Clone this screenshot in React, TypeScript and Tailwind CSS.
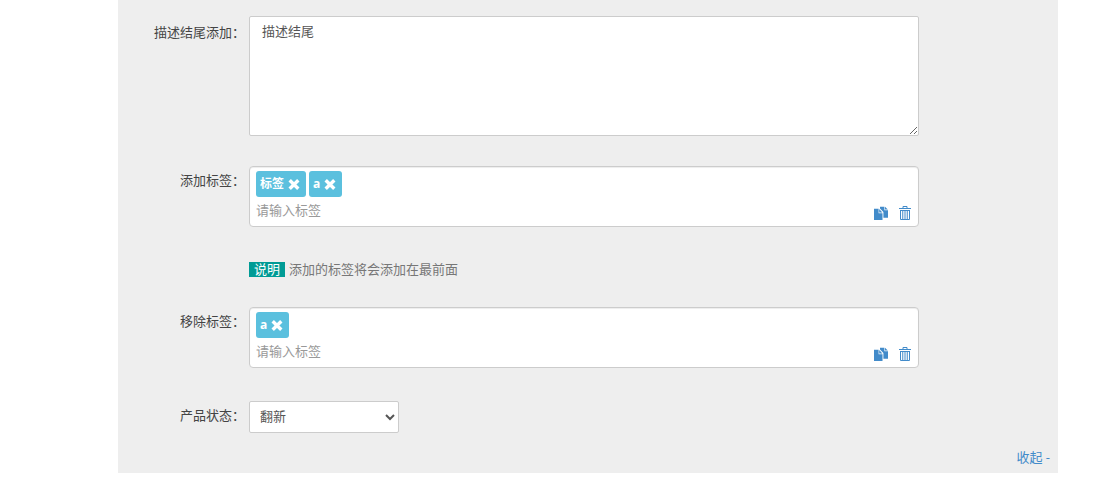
import { useState } from 'react';
import type { ReactNode } from 'react';

function RemoveIcon() {
  return (
    <svg viewBox="0 0 12 12" className="w-3 h-3" fill="none" stroke="currentColor" strokeWidth="3.4" aria-hidden="true">
      <path d="M1.7 2.2 10.3 10.8M10.3 2.2 1.7 10.8" />
    </svg>
  );
}

function CopyIcon() {
  return (
    <svg viewBox="0 0 14 14" className="w-3.5 h-3.5" fill="currentColor" aria-hidden="true">
      <path d="M6 .8h4.4v3.4H14v7.6H9.4V6L6 2.4z" />
      <path d="M11 .8 13.8 3.6H11z" />
      <path d="M0 2.8h4.6v4.4h3.9V14H0z" />
      <path d="M5.2 3 8.4 6.6H5.2z" />
    </svg>
  );
}

function TrashIcon() {
  return (
    <svg viewBox="0 0 14 14" className="w-3.5 h-3.5" fill="none" stroke="currentColor" aria-hidden="true">
      <path d="M5 2V.5h4V2M1 2.5h12" />
      <path d="M2.5 4v9.5h9V4M2 4.5h10" />
      <path d="M4.75 5v8M7 5v8M9.25 5v8" />
    </svg>
  );
}

function Row({ label, id, multiline, children }: { label: string; id: string; multiline?: boolean; children: ReactNode }) {
  return (
    <div className="flex gap-1">
      <label
        htmlFor={id}
        className={`w-[127px] shrink-0 text-right leading-5 text-[#444] ${multiline ? 'pt-1.5' : 'pt-1'}`}
      >
        {label}
      </label>
      <div className="flex-1">{children}</div>
    </div>
  );
}

function TagBox({ id, initial }: { id: string; initial: string[] }) {
  const [tags, setTags] = useState(initial);
  const [text, setText] = useState('');

  const addTag = () => {
    const value = text.trim();
    if (value && !tags.includes(value)) setTags([...tags, value]);
    setText('');
  };

  return (
    <div className="rounded border border-[#ccc] bg-white px-1.5 pt-1 pb-1.5 shadow-[inset_0_1px_1px_rgba(0,0,0,0.075)]">
      <div className="flex min-h-[26px] flex-wrap gap-[3px]">
        {tags.map((tag) => (
          <span
            key={tag}
            className="flex h-[26px] items-center gap-1 rounded-[3px] bg-[#5bc0de] pr-1.5 pl-1 text-[12px] font-bold text-white"
          >
            {tag}
            <button type="button" aria-label={`移除 ${tag}`} onClick={() => setTags(tags.filter((t) => t !== tag))}>
              <RemoveIcon />
            </button>
          </span>
        ))}
      </div>
      <div className="flex items-end gap-[10px] pt-0.5">
        <input
          id={id}
          value={text}
          placeholder="请输入标签"
          onChange={(e) => setText(e.target.value)}
          onKeyDown={(e) => e.key === 'Enter' && addTag()}
          className="h-[21px] min-w-0 flex-1 text-[#555] outline-none placeholder:text-[#999]"
        />
        <button
          type="button"
          aria-label="复制"
          className="text-[#428bca]"
          onClick={() => navigator.clipboard?.writeText(tags.join(','))}
        >
          <CopyIcon />
        </button>
        <button type="button" aria-label="清空" className="text-[#428bca]" onClick={() => setTags([])}>
          <TrashIcon />
        </button>
      </div>
    </div>
  );
}

export default function App() {
  return (
    <form className="mr-[39px] ml-[118px] bg-[#eee] pt-4 font-['Open_Sans','Noto_Sans_CJK_SC',sans-serif] text-[13px]">
      <div className="pr-[139px]">
        <Row label="描述结尾添加：" id="description" multiline>
          <textarea
            id="description"
            defaultValue="描述结尾"
            className="block h-[120px] w-full rounded-[2px] border border-[#ccc] bg-white px-3 py-1 leading-5 text-[#555]"
          />
        </Row>

        <div className="pt-[30px]">
          <Row label="添加标签：" id="add-tags">
            <TagBox id="add-tags" initial={['标签', 'a']} />
            <p className="flex items-center gap-1 pt-8 leading-5 text-[#777]">
              <span className="bg-[#009b95] px-[5px] leading-[15px] text-white">说明</span>
              添加的标签将会添加在最前面
            </p>
          </Row>
        </div>

        <div className="pt-7">
          <Row label="移除标签：" id="remove-tags">
            <TagBox id="remove-tags" initial={['a']} />
          </Row>
        </div>

        <div className="pt-[33px]">
          <Row label="产品状态：" id="status">
            <select
              id="status"
              defaultValue="翻新"
              className="block h-8 w-[150px] rounded-[2px] border border-[#ccc] bg-white px-1.5 pb-0.5 text-[#555]"
            >
              <option>全新</option>
              <option>翻新</option>
            </select>
          </Row>
        </div>
      </div>

      <div className="flex justify-end px-2 pt-[14px] pb-1.5">
        <a href="#collapse" className="leading-5 text-[#428bca]">
          收起 -
        </a>
      </div>
    </form>
  );
}
